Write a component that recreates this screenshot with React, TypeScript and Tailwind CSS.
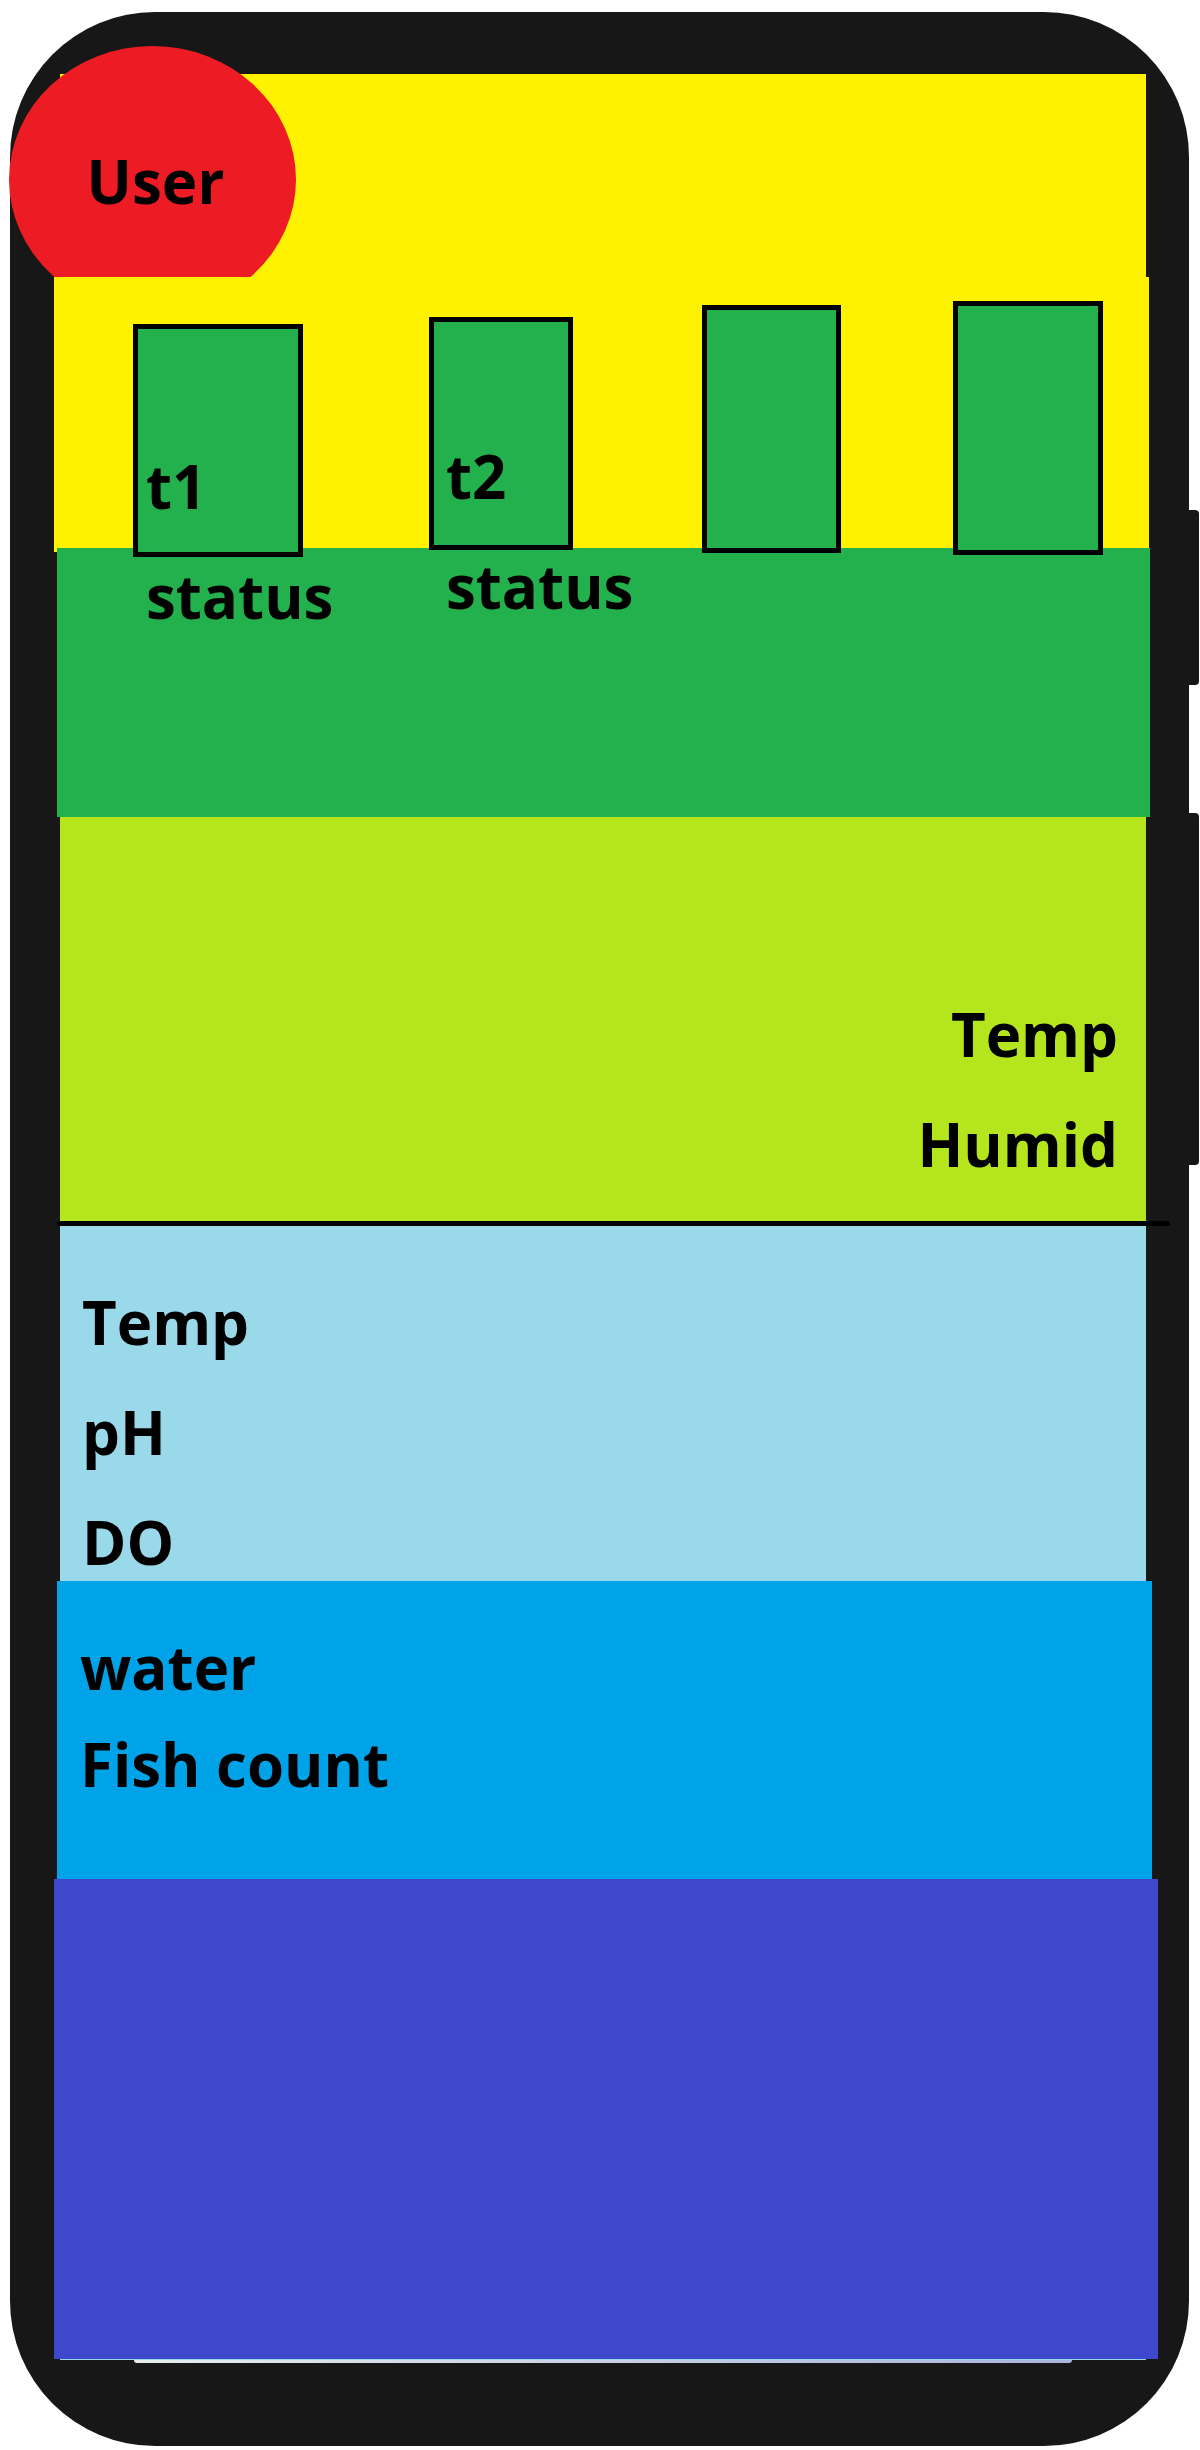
import type { ReactNode } from "react";

type TankProps = { className: string; children?: ReactNode };

function Tank({ className, children }: TankProps) {
  return (
    <article className={`relative z-10 min-w-0 border-5 border-black bg-[#22b14c] whitespace-nowrap ${className}`}>
      {children}
    </article>
  );
}

function SideButtons() {
  return (
    <div className="absolute top-[498px] left-full flex w-2.5 flex-col gap-32">
      <span className="h-[175px] rounded-r-sm bg-[#171717]" />
      <span className="h-[352px] rounded-r-sm bg-[#171717]" />
    </div>
  );
}

export default function App() {
  return (
    <div className="bg-white pt-3 pr-[11px] pb-1 pl-2.5 font-['Open_Sans','Noto_Sans',sans-serif] text-[60px] leading-[110px] font-bold text-black">
      <div className="relative rounded-[145px] bg-[#171717] pt-[62px] pr-[43px] pb-[83px] pl-[50px]">
        <SideButtons />

        <header className="relative h-[203px] bg-[#fff200]">
          <button
            type="button"
            className="absolute -top-7 -left-[51px] h-[267px] w-[287px] rounded-[50%] bg-[#ed1c24] pt-0.5 pl-1.5"
          >
            User
          </button>
        </header>

        <section className="relative -mr-[3px] -ml-1.5 grid h-[275px] grid-cols-[170fr_126fr_144fr_129fr_139fr_112fr_150fr] items-start bg-[#fff200] pr-[46px] pl-[79px]">
          <Tank className="col-start-1 mt-[47px] h-[233px] pt-[102px] pl-2">
            <p>t1</p>
            <p>status</p>
          </Tank>
          <Tank className="col-start-3 mt-10 h-[233px] pt-[99px] pl-3">
            <p>t2</p>
            <p>status</p>
          </Tank>
          <Tank className="col-start-5 mt-7 h-[248px]" />
          <Tank className="col-start-7 mt-6 h-[254px]" />
        </section>
        <section className="relative -mt-1 -mr-1 -ml-[3px] h-[269px] bg-[#22b14c]" />

        <section className="bg-[#b5e61d] pt-[162px] pr-7 pb-[22px] text-right">
          <p>Temp</p>
          <p>Humid</p>
        </section>

        <hr className="-mr-6 -ml-[3px] h-[5px] rounded-full border-0 bg-black" />

        <section className="h-[355px] bg-[#99d9ea] pt-[41px] pl-[22px]">
          <p>Temp</p>
          <p>pH</p>
          <p>DO</p>
        </section>

        <section className="-mr-1.5 -ml-[3px] bg-[#00a2e8] pt-[38px] pb-[66px] pl-[23px] leading-[97px]">
          <p>water</p>
          <p>Fish count</p>
        </section>

        <section className="-mr-3 -ml-1.5 h-[480px] bg-[#3f48cc]" />
        <div className="h-px bg-[#99d9ea]" />
        <div className="mx-[74px] h-[3px] rounded-b-full bg-linear-to-r from-[#e8eeee] to-[#a9b4dc]" />
      </div>
    </div>
  );
}
